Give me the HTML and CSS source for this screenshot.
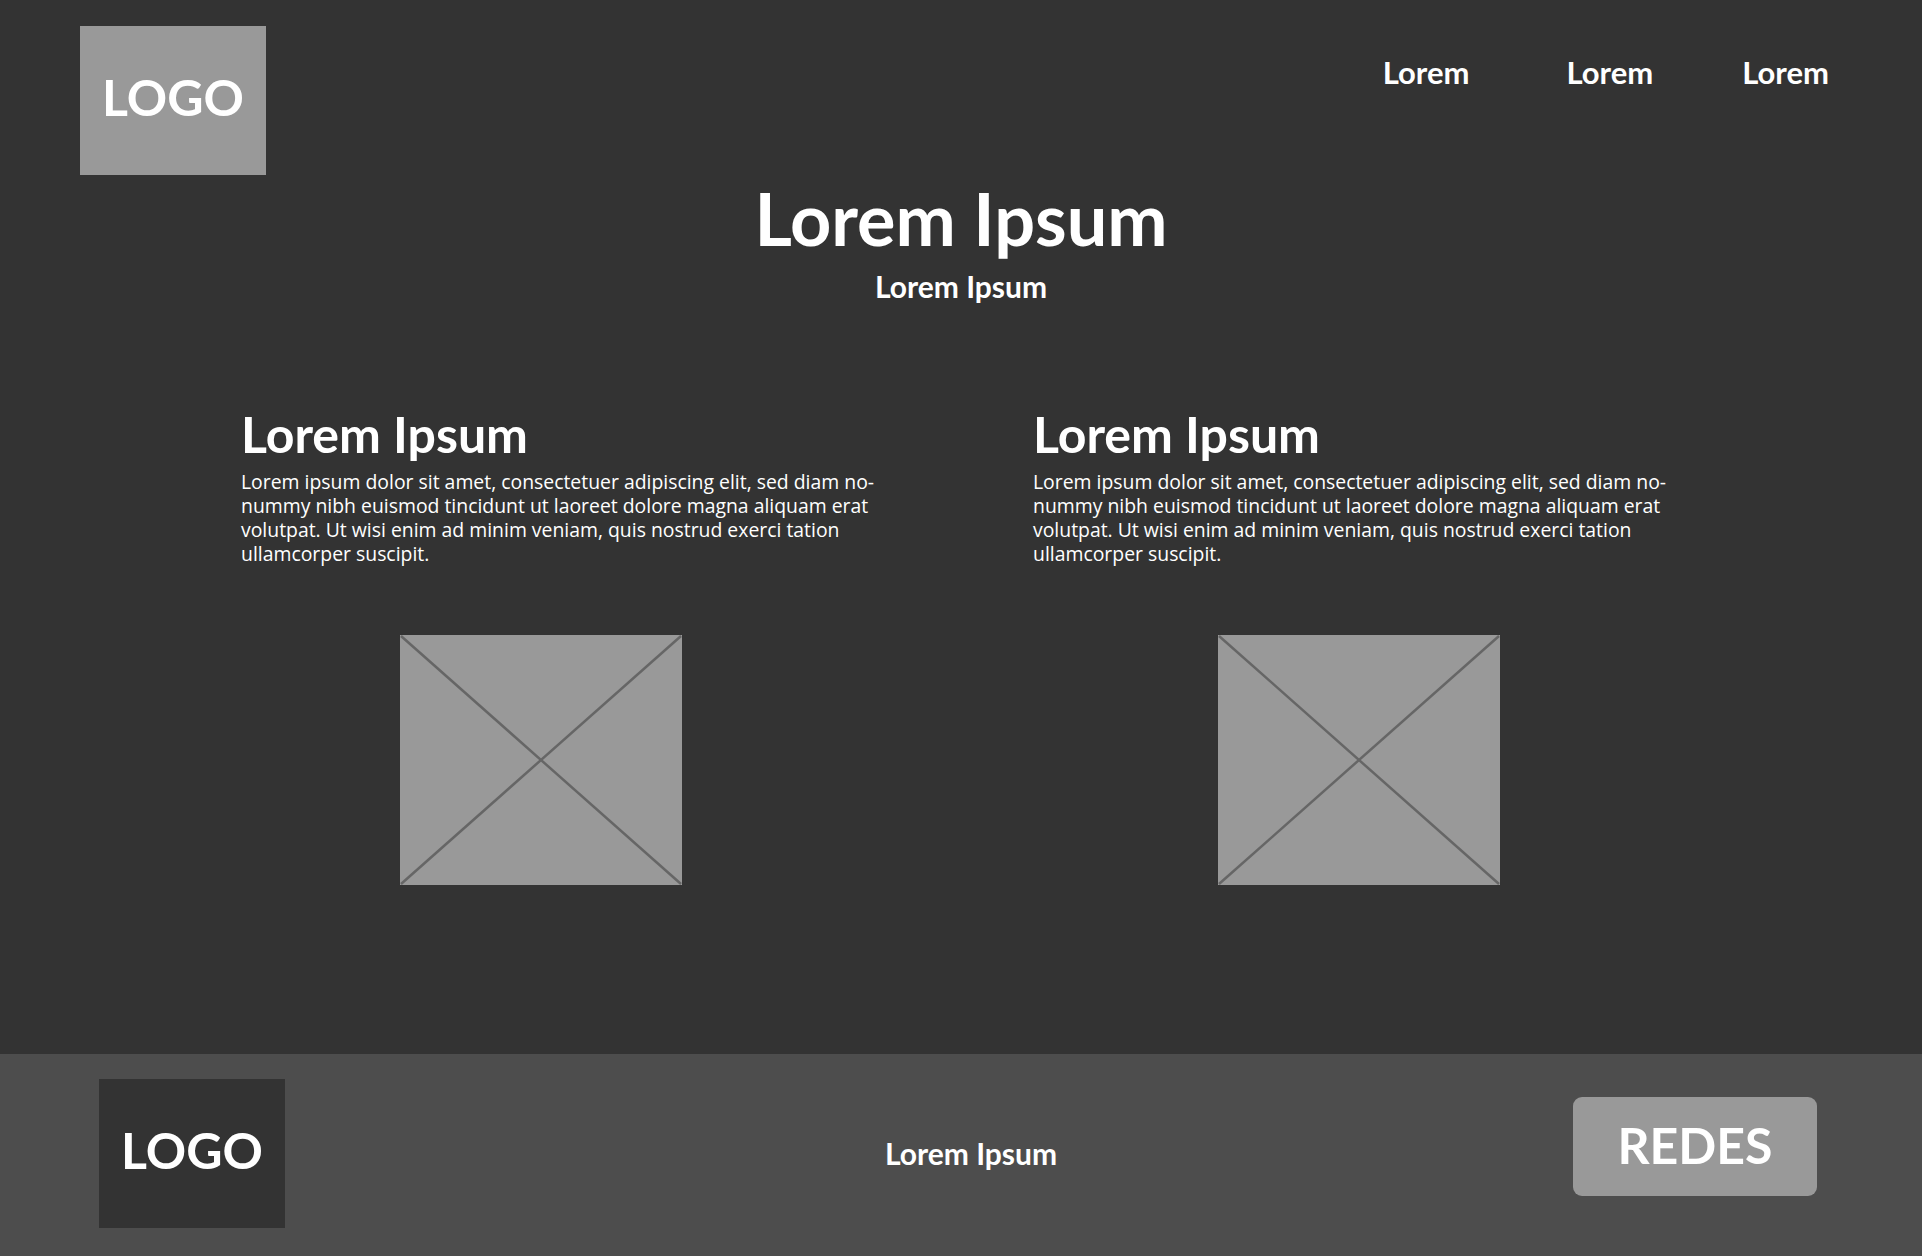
FILE: index.html
```html
<!DOCTYPE html>
<html lang="es">
<head>
<meta charset="utf-8">
<title>Wireframe</title>
<link rel="stylesheet" href="styles.css">
</head>
<body>
<div class="page">
  <main class="main">
    <header class="header">
      <div class="logo">LOGO</div>
      <nav class="nav">
        <a class="nav-item">Lorem</a>
        <a class="nav-item">Lorem</a>
        <a class="nav-item">Lorem</a>
      </nav>
    </header>
    <section class="hero">
      <h1 class="hero-title">Lorem Ipsum</h1>
      <p class="hero-sub">Lorem Ipsum</p>
    </section>
    <section class="cols">
      <article class="col col-a">
        <h2 class="col-title">Lorem Ipsum</h2>
        <p class="col-text">Lorem ipsum dolor sit amet, consectetuer adipiscing elit, sed diam no-<br>nummy nibh euismod tincidunt ut laoreet dolore magna aliquam erat<br>volutpat. Ut wisi enim ad minim veniam, quis nostrud exerci tation<br>ullamcorper suscipit.</p>
        <svg class="ph" viewBox="0 0 282 250" width="282" height="250"><rect width="282" height="250" fill="#999999"/><line x1="1" y1="1" x2="281" y2="249" stroke="#666666" stroke-width="2.5"/><line x1="281" y1="1" x2="1" y2="249" stroke="#666666" stroke-width="2.5"/></svg>
      </article>
      <article class="col col-b">
        <h2 class="col-title">Lorem Ipsum</h2>
        <p class="col-text">Lorem ipsum dolor sit amet, consectetuer adipiscing elit, sed diam no-<br>nummy nibh euismod tincidunt ut laoreet dolore magna aliquam erat<br>volutpat. Ut wisi enim ad minim veniam, quis nostrud exerci tation<br>ullamcorper suscipit.</p>
        <svg class="ph" viewBox="0 0 282 250" width="282" height="250"><rect width="282" height="250" fill="#999999"/><line x1="1" y1="1" x2="281" y2="249" stroke="#666666" stroke-width="2.5"/><line x1="281" y1="1" x2="1" y2="249" stroke="#666666" stroke-width="2.5"/></svg>
      </article>
    </section>
  </main>
  <footer class="footer">
    <div class="logo logo-dark">LOGO</div>
    <p class="footer-text">Lorem Ipsum</p>
    <a class="btn">REDES</a>
  </footer>
</div>
</body>
</html>
```
FILE: styles.css
```css
* { box-sizing: border-box; }
html, body { margin: 0; padding: 0; }
body {
  background: #333333;
  color: #ffffff;
  font-family: "Lato", "Open Sans", sans-serif;
}
.page {
  display: flex;
  flex-direction: column;
  height: 1256px;
  overflow: hidden;
}
.main {
  flex: 1;
  background: #333333;
}
.header {
  display: flex;
  justify-content: space-between;
  align-items: flex-start;
  padding: 26px 93px 0 80px;
}
.logo {
  width: 186px;
  height: 149px;
  background: #999999;
  display: flex;
  align-items: center;
  justify-content: center;
  font-weight: 700;
  font-size: 50px;
  color: #ffffff;
  padding-bottom: 8px;
}
.logo-dark { background: #333333; padding-bottom: 8px; }
.nav {
  display: flex;
  padding-top: 27px;
}
.nav-item {
  font-size: 31px;
  font-weight: 700;
  color: #ffffff;
}
.nav-item + .nav-item { margin-left: 97px; }
.nav-item:last-child { margin-left: 89px; }
.hero {
  text-align: center;
  margin-top: 0;
}
.hero-title {
  margin: 0;
  font-size: 72px;
  font-weight: 700;
  line-height: 1.2;
}
.hero-sub {
  margin: 7px 0 0;
  font-size: 30px;
  font-weight: 700;
  line-height: 1.2;
}
.cols {
  display: grid;
  grid-template-columns: 792px 792px;
  padding-left: 241px;
  margin-top: 103px;
}
.col-title {
  margin: 0;
  font-size: 50px;
  font-weight: 700;
  line-height: 1.1;
}
.col-text {
  margin: 8px 0 0;
  font-family: "Open Sans", sans-serif;
  font-size: 19.4px;
  line-height: 24px;
}
.ph { display: block; margin-top: 69px; }
.col-a .ph { margin-left: 159px; }
.col-b .ph { margin-left: 185px; }
.footer {
  height: 202px;
  background: #4d4d4d;
  display: flex;
  align-items: flex-start;
  padding: 25px 105px 0 99px;
}
.footer .logo { flex: none; }
.footer-text {
  flex: 1;
  text-align: center;
  margin: 56px 0 0;
  padding-left: 84px;
  font-size: 30px;
  font-weight: 700;
}
.btn {
  width: 244px;
  height: 99px;
  margin-top: 18px;
  border-radius: 9px;
  background: #999999;
  display: flex;
  align-items: center;
  justify-content: center;
  font-size: 50px;
  font-weight: 700;
  color: #ffffff;
  padding-bottom: 4px;
}
```
